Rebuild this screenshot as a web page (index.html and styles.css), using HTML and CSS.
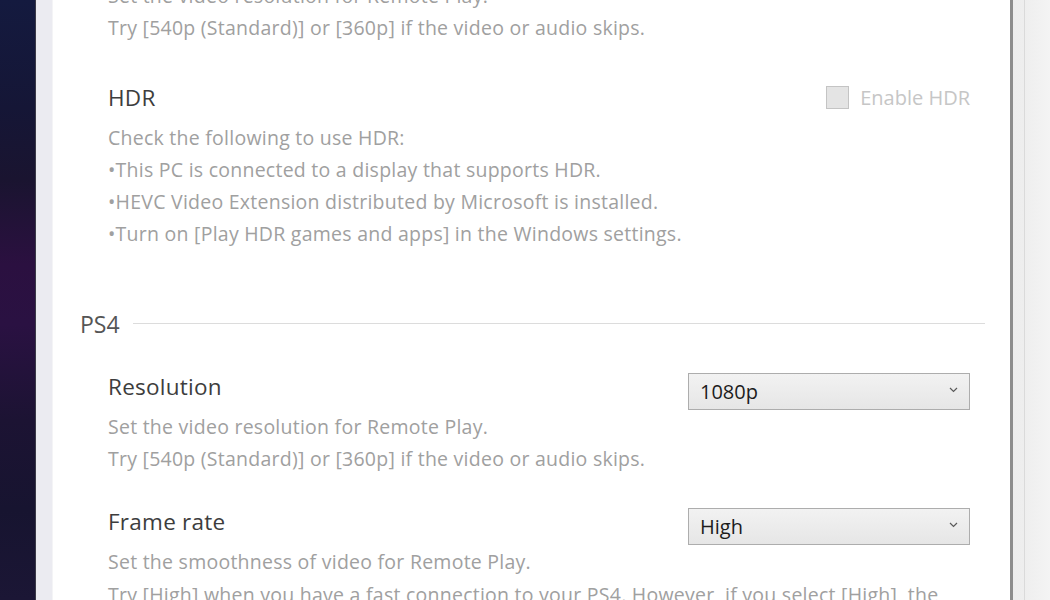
FILE: index.html
```html
<!DOCTYPE html>
<html lang="en">
<head>
<meta charset="utf-8">
<title>Remote Play Settings</title>
<link rel="stylesheet" href="styles.css">
</head>
<body>
<div class="screen">
  <div class="desktop"></div>
  <div class="window-edge"></div>
  <main class="content">
    <div class="scroller">
      <section class="setting lead">
        <p class="desc">Set the video resolution for Remote Play.<br>Try [540p (Standard)] or [360p] if the video or audio skips.</p>
      </section>

      <section class="setting hdr">
        <div class="row">
          <h3 class="title">HDR</h3>
          <label class="check"><span class="box"></span><span>Enable HDR</span></label>
        </div>
        <p class="desc">Check the following to use HDR:<br>•This PC is connected to a display that supports HDR.<br>•HEVC Video Extension distributed by Microsoft is installed.<br>•Turn on [Play HDR games and apps] in the Windows settings.</p>
      </section>

      <section class="group">
        <div class="group-head"><span class="group-name">PS4</span><span class="rule"></span></div>

        <div class="setting res">
          <div class="row">
            <h3 class="title">Resolution</h3>
            <div class="select"><span>1080p</span><svg class="chev" width="9" height="6" viewBox="0 0 9 6"><path d="M1 1 L4.5 4.5 L8 1" fill="none" stroke="#5a5a5a" stroke-width="1.2"/></svg></div>
          </div>
          <p class="desc">Set the video resolution for Remote Play.<br>Try [540p (Standard)] or [360p] if the video or audio skips.</p>
        </div>

        <div class="setting fps">
          <div class="row">
            <h3 class="title">Frame rate</h3>
            <div class="select"><span>High</span><svg class="chev" width="9" height="6" viewBox="0 0 9 6"><path d="M1 1 L4.5 4.5 L8 1" fill="none" stroke="#5a5a5a" stroke-width="1.2"/></svg></div>
          </div>
          <p class="desc">Set the smoothness of video for Remote Play.<br>Try [High] when you have a fast connection to your PS4. However, if you select [High], the</p>
        </div>
      </section>
    </div>
  </main>
  <div class="scrollbar"><div class="track"></div></div>
</div>
</body>
</html>
```

FILE: styles.css
```css
* { box-sizing: border-box; }
html, body { margin: 0; padding: 0; }
body {
  width: 1050px;
  height: 600px;
  overflow: hidden;
  font-family: "Open Sans", "Noto Sans", sans-serif;
}
.screen {
  display: flex;
  height: 600px;
  overflow: hidden;
}
.desktop {
  width: 35px;
  flex: none;
  background: linear-gradient(180deg, #141a3f 0%, #151636 18%, #1a1430 30%, #2b1040 44%, #2a1142 54%, #1c1333 70%, #171430 85%, #1b1635 100%);
}
.window-edge {
  width: 18px;
  flex: none;
  border-left: 1px solid #3b3a48;
  background: #ebebf1;
  border-right: 1px solid #f4f4f6;
}
.content {
  width: 957px;
  flex: none;
  background: #ffffff;
  overflow: hidden;
  padding: 0 40px 0 55px;
}
.scroller {
  margin-top: -20px;
}
.scrollbar {
  flex: 1;
  border-left: 3px solid #8d8d8d;
  background: linear-gradient(90deg, #ededed 0%, #eeeeee 30%, #f4f4f4 100%);
  display: flex;
}
.track {
  width: 12px;
  border-right: 1px solid #dadada;
}
.desc {
  margin: 0;
  font-size: 19.5px;
  letter-spacing: 0.25px;
  line-height: 32.3px;
  color: #a0a0a0;
  white-space: nowrap;
}
.row {
  display: flex;
  justify-content: space-between;
  align-items: flex-start;
  height: 40px;
}
.title {
  margin: 0;
  font-weight: normal;
  font-size: 22.5px;
  letter-spacing: 0.25px;
  line-height: 40px;
  color: #3d3d3d;
}
.setting .desc { margin-top: 4px; }
.setting.lead .desc { margin-top: 0; }
.setting.hdr { margin-top: 33px; }
.check {
  display: flex;
  align-items: center;
  gap: 11px;
  height: 40px;
  font-size: 20px;
  color: #c6c6c6;
}
.box {
  width: 23px;
  height: 23px;
  border: 1px solid #c4c4c4;
  background: #e4e4e4;
}
.group { margin-top: 53px; }
.group-head {
  display: flex;
  align-items: center;
  height: 40px;
  margin-left: -28px;
  margin-right: -15px;
}
.group-name {
  font-size: 23px;
  color: #555555;
  line-height: 40px;
}
.rule {
  flex: 1;
  height: 1px;
  background: #dcdcdc;
  margin-left: 13px;
}
.setting.res { margin-top: 23px; }
.setting.fps { margin-top: 27px; }
.select {
  margin-top: 6px;
  width: 282px;
  height: 37px;
  border: 1px solid #adadad;
  background: linear-gradient(180deg, #f2f2f2 0%, #e6e6e6 100%);
  display: flex;
  align-items: center;
  justify-content: space-between;
  padding: 0 11px 0 11px;
  font-size: 20px;
  color: #1c1c1c;
}
.chev { margin-top: -3px; }
```
